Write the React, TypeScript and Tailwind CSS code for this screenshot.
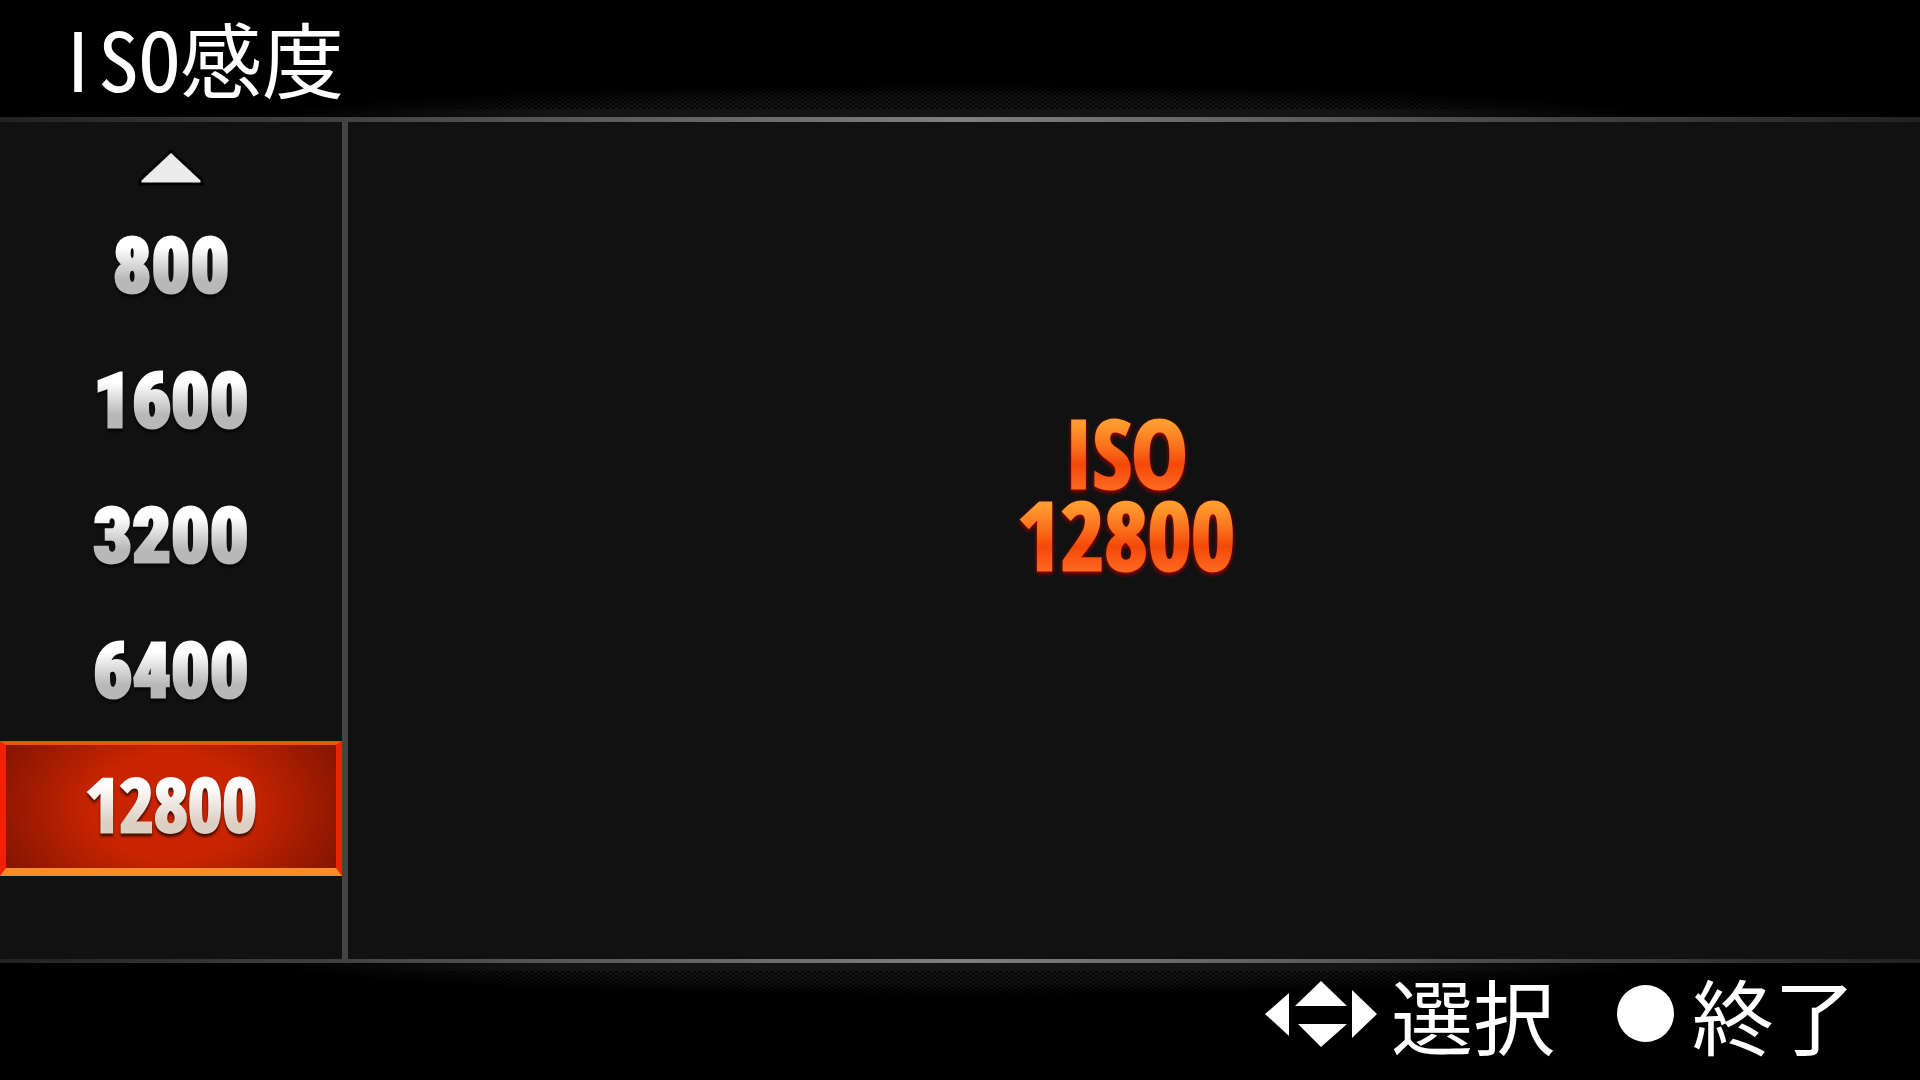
import { clsx } from 'clsx';

const ISO_VALUES = ['800', '1600', '3200', '6400', '12800'];
const SELECTED = '12800';

const Rule = ({ edge }: { edge: 'top' | 'bottom' }) => (
  <div
    className={clsx(
      'relative shrink-0 bg-linear-to-r from-[#222] via-[#808080] to-[#222]',
      edge === 'top' ? 'h-[5px]' : 'h-1'
    )}
  >
    <div
      className={clsx(
        'absolute inset-x-0 flex h-8',
        edge === 'top'
          ? 'bottom-full items-start bg-radial-[ellipse_36%_100%_at_50%_100%] from-[#141414] from-60% to-transparent'
          : 'top-full items-end bg-radial-[ellipse_36%_100%_at_50%_0%] from-[#141414] from-60% to-transparent'
      )}
    >
      <div className="h-6 flex-1 bg-[conic-gradient(#000_25%,transparent_0_50%,#000_0_75%,transparent_0)] bg-size-[6px_4px] opacity-70" />
    </div>
  </div>
);

const UpButton = () => (
  <button type="button" aria-label="Scroll up" className="mt-[26px] flex h-10 justify-center">
    <svg width="66" height="38" viewBox="0 0 66 38">
      <path d="M33 3 64 32V36H2V32Z" fill="#ececec" stroke="#000" strokeWidth="3" />
    </svg>
  </button>
);

const DirectionPad = () => (
  <svg width="112" height="66" viewBox="0 0 112 66" fill="#fff" aria-hidden="true">
    <path d="M56 0 82 25H30Z" />
    <path d="M56 66 82 43H33Z" />
    <path d="M0 33 24 12V55Z" />
    <path d="M112 33 87 9V57Z" />
  </svg>
);

const App = () => {
  return (
    <div className="flex min-h-screen flex-col bg-black font-['Noto_Sans_CJK_JP','Noto_Sans_CJK_SC',sans-serif] text-white">
      <header className="relative z-10 flex h-[117px] shrink-0 items-center pb-1 pl-[58px]">
        <h1 className="text-[82px] leading-[112px]">
          <span className="inline-block w-10 text-center">I</span>
          <span className="[font-feature-settings:'hwid']">SO</span>
          感度
        </h1>
      </header>

      <Rule edge="top" />

      <main className="flex flex-1 bg-[#111]">
        <nav className="flex w-[348px] shrink-0 flex-col border-r-[6px] border-[#444]">
          <UpButton />
          <ul className="mt-[13px]">
            {ISO_VALUES.map(value => (
              <li key={value}>
                <button
                  type="button"
                  aria-pressed={value === SELECTED}
                  className={clsx(
                    'flex h-[135px] w-full items-center justify-center pb-[6px] leading-[92px]',
                    value === SELECTED
                      ? "border-x-[6px] border-t-4 border-b-8 border-x-[#f02000] border-t-[#f25010] border-b-[#fa8c28] bg-radial-[ellipse_60%_110%] from-[#c82400] from-40% to-[#7c1400] font-['Open_Sans_Condensed',sans-serif] text-[74px] font-extrabold"
                      : "font-['Roboto_Condensed',sans-serif] text-[76px] font-black"
                  )}
                >
                  <span
                    className={clsx(
                      'bg-clip-text text-transparent drop-shadow-[0_3px_1px_#000000a0] [-webkit-text-stroke:3px_transparent]',
                      value === SELECTED
                        ? 'bg-linear-to-b from-white from-30% to-[#dcd0c4] to-70%'
                        : 'bg-linear-to-b from-white from-30% to-[#b8b8b8] to-65%'
                    )}
                  >
                    {value}
                  </span>
                </button>
              </li>
            ))}
          </ul>
        </nav>

        <section className="flex flex-1 flex-col items-center pt-[289px] pr-4 font-['Open_Sans_Condensed',sans-serif] text-[94px] leading-[82px] font-extrabold drop-shadow-[0_2px_2px_#b00000]">
          {['ISO', SELECTED].map(line => (
            <p
              key={line}
              className="bg-linear-to-b from-[#ff9c30] from-15% via-[#f44808] via-65% to-[#ff6c20] bg-clip-text text-transparent [-webkit-text-stroke:3px_transparent]"
            >
              {line}
            </p>
          ))}
        </section>
      </main>

      <Rule edge="bottom" />

      <footer className="relative z-10 flex h-[117px] shrink-0 items-center justify-end pr-16 pb-4 text-[82px] leading-[100px]">
        <p className="flex items-center gap-[14px]">
          <DirectionPad />
          選択
        </p>
        <p className="ml-[62px] flex items-center gap-[18px]">
          <span className="size-[57px] rounded-full bg-white" />
          終了
        </p>
      </footer>
    </div>
  );
};

export default App;
